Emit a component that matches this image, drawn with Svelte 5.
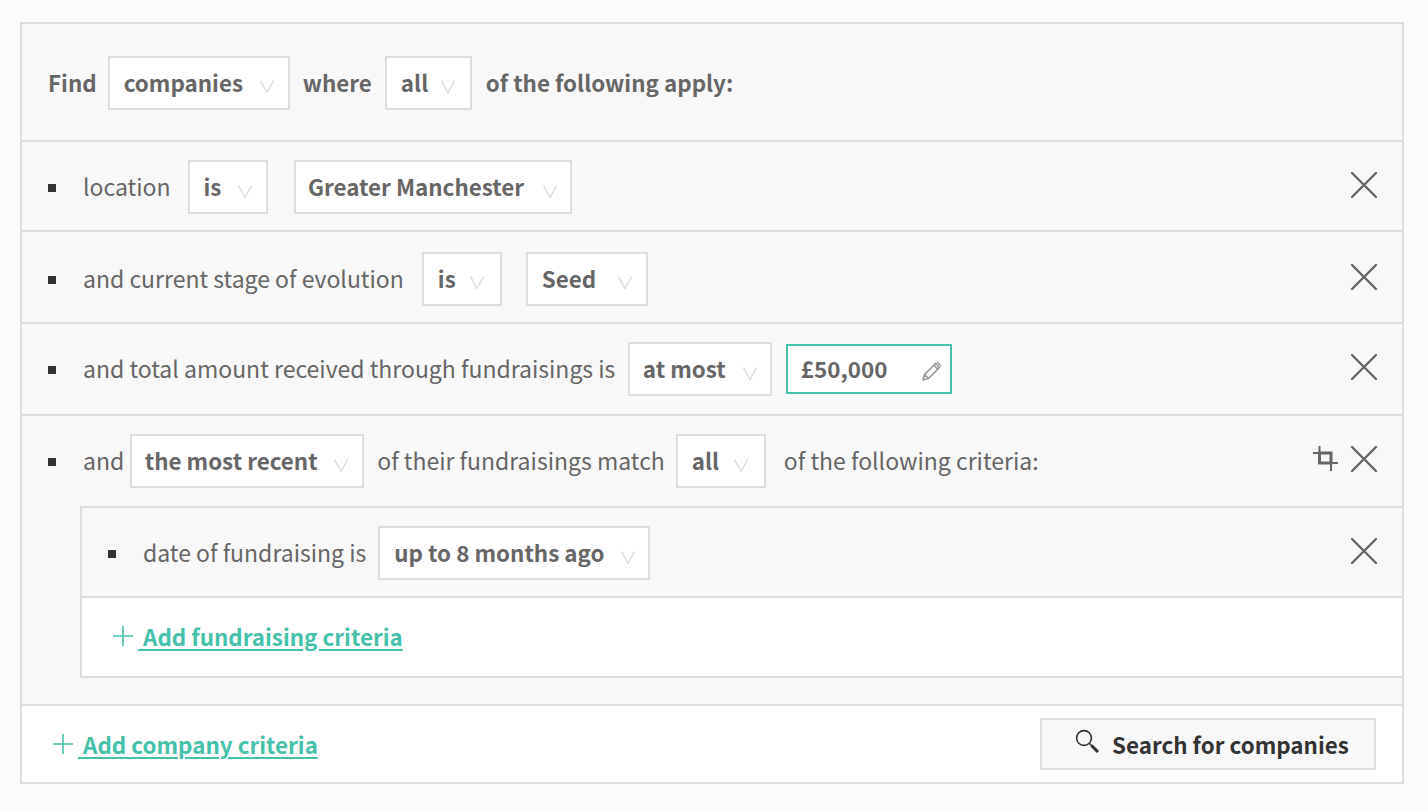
<script>
  const chevron = 'M0 0 L6.5 12 L13 0';
</script>

{#snippet sel(label, width, chevX = 0, chevY = 22, tight = false)}
  <span class="sel" class:tight style="width:{width}px">
    <b>{label}</b>
    <svg class="chev" style="right:{chevX}px;top:{chevY}px" width="14" height="13" viewBox="-0.5 -0.5 14 13"><path d={chevron} /></svg>
  </span>
{/snippet}

{#snippet close()}
  <svg class="x" width="28" height="28" viewBox="0 0 28 28"><path d="M2 2 L26 26 M26 2 L2 26" /></svg>
{/snippet}

{#snippet plus()}
  <svg class="plus" width="20" height="20" viewBox="0 0 20 20"><path d="M10 0 V20 M0 10 H20" /></svg>
{/snippet}

<div class="page">
  <div class="panel">
    <div class="head">
      <strong class="find">Find</strong>
      {@render sel('companies', 182, 14)}
      <strong class="where">where</strong>
      {@render sel('all', 87, 15)}
      <strong class="apply">of the following apply:</strong>
    </div>

    <div class="row r1">
      <i class="dot"></i>
      <span class="t">location</span>
      <span class="g17">{@render sel('is', 80, 14, 23)}</span>
      <span class="g26">{@render sel('Greater Manchester', 278, 13, 23, true)}</span>
      <span class="act">{@render close()}</span>
    </div>

    <div class="row r2">
      <i class="dot"></i>
      <span class="t">and current stage of evolution</span>
      <span class="g18">{@render sel('is', 80, 16)}</span>
      <span class="g24">{@render sel('Seed', 122, 14)}</span>
      <span class="act">{@render close()}</span>
    </div>

    <div class="row r3">
      <i class="dot"></i>
      <span class="t">and total amount received through fundraisings is</span>
      <span class="g13">{@render sel('at most', 144, 13, 23, true)}</span>
      <span class="val">
        <b>£50,000</b>
        <svg class="pen" width="20" height="20" viewBox="0 0 20 20"><path d="M1 19 L2.5 13.5 L13.5 2.5 L17.5 6.5 L6.5 17.5 Z M2.5 13.5 L6.5 17.5 M11.8 4.2 L15.8 8.2 M15 1 L19 5" /></svg>
      </span>
      <span class="act">{@render close()}</span>
    </div>

    <div class="group">
      <div class="row r4">
        <i class="dot"></i>
        <span class="t">and</span>
        <span class="g6">{@render sel('the most recent', 234, 14, 23, true)}</span>
        <span class="t g13t">of their fundraisings match</span>
        <span class="g11">{@render sel('all', 90, 16, 23)}</span>
        <span class="t g18t">of the following criteria:</span>
        <span class="act">
          <svg class="crop" width="26" height="26" viewBox="0 0 26 26"><path class="tail" d="M6.5 0 V7 M0 7 H6.5 M18 17 H25 M18 17 V25" /><path d="M6.5 7 V17 H18 V7 Z" /></svg>
          {@render close()}
        </span>
      </div>

      <div class="nested">
        <div class="row r5">
          <i class="dot d2"></i>
          <span class="t">date of fundraising is</span>
          <span class="g12">{@render sel('up to 8 months ago', 272, 13, 23)}</span>
          <span class="act">{@render close()}</span>
        </div>
        <div class="add-in">
          {@render plus()}
          <a href="#add" class="link">&nbsp;Add fundraising criteria</a>
        </div>
      </div>
    </div>

    <div class="foot">
      <div class="add-co">
        {@render plus()}
        <a href="#add" class="link">&nbsp;Add company criteria</a>
      </div>
      <button class="search">
        <svg width="26" height="26" viewBox="0 0 26 26"><circle cx="9" cy="9" r="7.4" /><path class="thin" d="M14 14 L17 17" /><path class="thick" d="M16.5 16.5 L23 23" /></svg>
        <span>Search for companies</span>
      </button>
    </div>
  </div>
</div>

<style>
  :global(body) {
    margin: 0;
    background: #fbfbfb;
  }
  .page {
    height: 810px;
    box-sizing: border-box;
    padding: 22px 24px 0 20px;
    font-family: "Noto Sans CJK SC", "Source Sans Pro", "Noto Sans", sans-serif;
    font-size: 23px;
    line-height: 32px;
    color: #666;
  }
  .panel {
    border: 2px solid #ddd;
    background: #f8f8f8;
  }
  .head {
    display: flex;
    align-items: center;
    height: 116px;
    box-sizing: border-box;
    padding: 2px 0 0 26px;
  }
  strong, b {
    font-weight: 700;
    font-size: 22.4px;
  }
  .head strong { padding-bottom: 2px; }
  .find { margin-right: 11px; }
  .where { margin: 0 13px 0 13px; }
  .apply { margin-left: 14px; }
  .row {
    display: flex;
    align-items: flex-start;
    border-top: 2px solid #ddd;
    padding-left: 26px;
    position: relative;
  }
  .r1 { height: 70px; padding-top: 18px; }
  .r2 { height: 70px; padding-top: 20px; }
  .r2 .act { top: 31px; }
  .r3 { height: 72px; padding-top: 18px; }
  .r4 { height: 72px; padding-top: 18px; }
  .r5 { height: 70px; padding-top: 18px; }
  .dot {
    flex: none;
    width: 8px;
    height: 8px;
    background: #333;
    margin: 24px 27px 0 0;
  }
  .t { line-height: 52px; white-space: nowrap; }
  .sel {
    position: relative;
    display: inline-flex;
    align-items: center;
    height: 54px;
    box-sizing: border-box;
    background: #fff;
    border: 2px solid #ddd;
    padding: 0 0 2px 14px;
    white-space: nowrap;
  }
  .sel.tight { padding-left: 12.5px; }
  .chev {
    position: absolute;
  }
  .chev path {
    fill: none;
    stroke: #ddd;
    stroke-width: 1.5;
  }
  .g17 { margin-left: 17px; display: flex; }
  .g18 { margin-left: 18px; display: flex; }
  .g26 { margin-left: 26px; display: flex; }
  .g24 { margin-left: 24px; display: flex; }
  .g13 { margin-left: 13px; display: flex; }
  .g12 { margin-left: 12px; display: flex; }
  .g11 { margin-left: 11px; display: flex; }
  .g6 { margin-left: 6px; display: flex; }
  .g13t { margin-left: 13px; }
  .g18t { margin-left: 18px; }
  .val {
    position: relative;
    display: inline-flex;
    align-items: center;
    width: 166px;
    height: 50px;
    box-sizing: border-box;
    margin: 2px 0 0 14px;
    background: #fff;
    border: 2px solid #46c1a9;
    padding: 0 0 2px 12.5px;
  }
  .pen {
    position: absolute;
    right: 8px;
    top: 15px;
  }
  .pen path {
    fill: none;
    stroke: #999;
    stroke-width: 1.7;
    stroke-linejoin: round;
  }
  .act {
    position: absolute;
    right: 24px;
    top: 29px;
    display: flex;
    align-items: flex-start;
  }
  .x path {
    fill: none;
    stroke: #666;
    stroke-width: 2.4;
    stroke-linecap: round;
  }
  .crop {
    margin: 1px 11px 0 0;
  }
  .crop path {
    fill: none;
    stroke: #666;
    stroke-width: 3;
  }
  .crop .tail {
    stroke-width: 2;
  }
  .group {
    height: 292px;
    box-sizing: border-box;
    border-bottom: 2px solid #ddd;
  }
  .nested {
    margin-left: 58px;
    border-left: 2px solid #ddd;
    border-bottom: 2px solid #ddd;
  }
  .add-in {
    display: flex;
    align-items: center;
    height: 80px;
    box-sizing: border-box;
    background: #fff;
    border-top: 2px solid #ddd;
    padding: 0 0 2px 30px;
  }
  .plus {
    flex: none;
    margin: 0 5px 0 1px;
  }
  .plus path {
    fill: none;
    stroke: #46c1a9;
    stroke-width: 1.6;
  }
  .link {
    color: #46c1a9;
    font-weight: 700;
    font-size: 22.4px;
    text-decoration: underline;
    text-underline-offset: 3px;
    text-decoration-thickness: 2px;
    white-space: nowrap;
  }
  .foot {
    display: flex;
    align-items: center;
    justify-content: space-between;
    height: 76px;
    background: #fff;
    padding: 0 26px 0 30px;
  }
  .add-co {
    display: flex;
    align-items: center;
  }
  .search {
    display: flex;
    align-items: center;
    gap: 11px;
    width: 336px;
    height: 52px;
    box-sizing: border-box;
    padding: 0 0 0 33px;
    background: #f8f8f8;
    border: 2px solid #ddd;
    border-radius: 0;
    font: inherit;
    font-size: 22.4px;
    font-weight: 700;
    color: #333;
    white-space: nowrap;
  }
  .search svg { flex: none; margin-top: -4px; }
  .search circle, .search path {
    fill: none;
    stroke: #333;
    stroke-width: 1.6;
  }
  .search .thick {
    stroke-width: 3;
  }
</style>
